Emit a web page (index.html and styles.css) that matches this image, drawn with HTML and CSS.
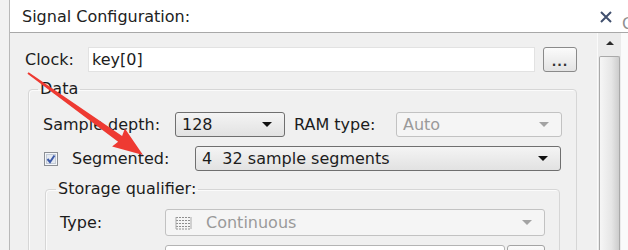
FILE: index.html
```html
<!DOCTYPE html>
<html lang="en">
<head>
    <meta charset="UTF-8">
    <title>Signal Configuration</title>
    <link rel="stylesheet" href="styles.css">
</head>
<body>
    <div class="app">
        <div class="gutter"></div>
        <div class="window">
            <div class="titlebar">
                <span class="title">Signal Configuration:</span>
                <svg class="close" width="14" height="12" viewBox="0 0 14 12">
                    <path d="M2 1 L12 11 M12 1 L2 11" stroke="#41506e" stroke-width="2" fill="none"/>
                </svg>
                <span class="peek">C</span>
            </div>
            <div class="body">
                <div class="main">
                    <div class="row clock-row">
                        <span class="lbl lbl-clock">Clock:</span>
                        <div class="textbox clock-box">key[0]</div>
                        <button class="btn btn-dots">...</button>
                    </div>

                    <fieldset class="group data">
                        <legend>Data</legend>
                        <div class="row">
                            <span class="lbl lbl-depth">Sample depth:</span>
                            <div class="combo w-depth"><span>128</span><i class="caret"></i></div>
                            <span class="lbl lbl-ram">RAM type:</span>
                            <div class="combo disabled w-ram"><span>Auto</span><i class="caret"></i></div>
                        </div>
                        <div class="row seg-row">
                            <span class="check">
                                <svg width="14" height="14" viewBox="0 0 14 14">
                                    <rect x="0.5" y="0.5" width="13" height="13" fill="#f4f6f9" stroke="#8c8f94"/>
                                    <rect x="2.5" y="2.5" width="9" height="9" fill="#e4e9f1" stroke="#c3cbd6"/>
                                    <path d="M3.5 7 L6 10 L10.5 3.5" stroke="#3d5aa8" stroke-width="2" fill="none"/>
                                </svg>
                            </span>
                            <span class="lbl lbl-seg">Segmented:</span>
                            <div class="combo w-seg"><span>4&nbsp; 32 sample segments</span><i class="caret"></i></div>
                        </div>

                        <fieldset class="group storage">
                            <legend>Storage qualifier:</legend>
                            <div class="row">
                                <span class="lbl lbl-type">Type:</span>
                                <div class="combo disabled w-type">
                                    <svg class="type-icon" width="17" height="14" viewBox="0 0 17 14">
                                        <path d="M1 1.5 H16 M1 4.5 H16 M1 7.5 H16 M1 10.5 H16 M1 13 H16" stroke="#8f8f8f" stroke-width="1" stroke-dasharray="2 1"/>
                                        <path d="M1 1 V13 M16 1 V13" stroke="#ababab" stroke-width="1"/>
                                    </svg>
                                    <span>Continuous</span><i class="caret"></i>
                                </div>
                            </div>
                            <div class="row last-row">
                                <div class="textbox w-last"></div>
                                <button class="btn btn-last"></button>
                            </div>
                        </fieldset>
                    </fieldset>
                </div>
                <div class="scrollbar">
                    <div class="sb-up"><i></i></div>
                    <div class="sb-thumb"></div>
                </div>
                <div class="edge"></div>
            </div>
        </div>

        <!-- red annotation arrow -->
        <svg class="arrow" width="628" height="250" viewBox="0 0 628 250">
            <polygon points="28.6,72.2 122.1,135.9 124.9,128.6 143,155 112.1,146.6 118.1,141.7 27.4,73.8" fill="#ee3a32"/>
        </svg>
    </div>
</body>
</html>
```

FILE: styles.css
```css
html, body {
    margin: 0;
    padding: 0;
}
body {
    width: 628px;
    height: 250px;
    overflow: hidden;
    font-family: "DejaVu Sans", Verdana, sans-serif;
    font-size: 16px;
    color: #1c1c1c;
    background: #f0f0f0;
}
.app {
    position: relative;
    display: flex;
    height: 250px;
}
.gutter {
    flex-shrink: 0;
    width: 9px;
    background: #f2f2f2;
    border-right: 1px solid #b9b9b9;
}
.window {
    flex: 1;
    min-width: 0;
    display: flex;
    flex-direction: column;
}
.titlebar {
    flex-shrink: 0;
    height: 32px;
    display: flex;
    align-items: center;
    background: #ffffff;
    border-bottom: 1px solid #a8a8a8;
}
.title {
    padding-left: 12px;
    color: #222;
}
.close {
    margin-left: auto;
    margin-right: 9px;
    margin-top: 1px;
}
.peek {
    width: 6px;
    overflow: hidden;
    color: #8f8f8f;
    font-size: 16px;
    margin-top: 14px;
}
.body {
    flex: 1;
    min-height: 0;
    overflow: hidden;
    display: flex;
    background: #f0f0f0;
}
.main {
    flex-shrink: 0;
    width: 552px;
    padding: 14px 20px 0 15px;
}
.row {
    display: flex;
    align-items: center;
}
.lbl {
    flex-shrink: 0;
    white-space: nowrap;
}
.lbl-clock { width: 63px; }
.textbox {
    flex-shrink: 0;
    box-sizing: border-box;
    height: 25px;
    background: #ffffff;
    border: 1px solid #e2e2e2;
    padding-left: 3px;
    line-height: 23px;
}
.clock-box { width: 447px; }
.btn {
    flex-shrink: 0;
    box-sizing: border-box;
    height: 25px;
    border: 1px solid #8a8a8a;
    border-radius: 3px;
    background: linear-gradient(#fbfbfb, #e3e3e3);
    padding: 0;
}
.btn-dots {
    width: 34px;
    margin-left: 8px;
    font-family: "DejaVu Sans", sans-serif;
    font-size: 12px;
    font-weight: bold;
    letter-spacing: 1px;
    color: #333;
    line-height: 28px;
}
.group {
    border: 1px solid #d6d6d6;
    border-radius: 4px;
    box-shadow: inset 1px 1px 0 #fbfbfb;
    margin: 0;
}
.group legend {
    padding: 0 2px;
    line-height: 18px;
}
.data {
    margin: 8px 0 0 3px;
    padding: 14px 14px 40px 14px;
}
.data legend {
    margin-left: -5px;
}
.lbl-depth { width: 132px; }
.combo {
    flex-shrink: 0;
    box-sizing: border-box;
    height: 25px;
    display: flex;
    align-items: center;
    border: 1px solid #6f6f6f;
    border-radius: 3px;
    background: linear-gradient(#f4f4f4, #e2e2e2);
    padding-left: 6px;
}
.caret {
    margin-left: auto;
    margin-right: 12px;
    width: 0;
    height: 0;
    border-left: 5px solid transparent;
    border-right: 5px solid transparent;
    border-top: 5px solid #111;
}
.combo.disabled {
    border-color: #c2c2c2;
    background: #f5f5f5;
    color: #9a9a9a;
}
.combo.disabled .caret {
    border-top-color: #a3a3a3;
}
.w-depth { width: 110px; }
.lbl-ram {
    width: 102px;
    margin-left: 9px;
}
.w-ram { width: 166px; }
.seg-row {
    margin-top: 9px;
}
.check {
    flex-shrink: 0;
    width: 14px;
    height: 14px;
    margin-left: 1px;
}
.check svg {
    display: block;
}
.lbl-seg {
    width: 123px;
    margin-left: 14px;
}
.w-seg { width: 366px; }
.storage {
    margin: 9px 2px 0 2px;
    padding: 11px 14px 20px 14px;
}
.storage legend {
    margin-left: -4px;
}
.lbl-type { width: 105px; }
.w-type {
    width: 380px;
    height: 27px;
    padding-left: 9px;
}
.type-icon {
    margin-right: 14px;
}
.last-row {
    margin-top: 9px;
    padding-left: 105px;
}
.w-last {
    width: 340px;
    border-color: #b4b4b4;
    border-radius: 3px;
}
.btn-last {
    width: 38px;
    margin-left: 2px;
    border-color: #a4a4a4;
}
.scrollbar {
    flex-shrink: 0;
    box-sizing: border-box;
    width: 24px;
    display: flex;
    flex-direction: column;
    background: #ebebeb;
    border-left: 1px solid #fafafa;
}
.sb-up {
    flex-shrink: 0;
    height: 23px;
    display: flex;
    justify-content: center;
    align-items: center;
}
.sb-up i {
    width: 0;
    height: 0;
    border-left: 4px solid transparent;
    border-right: 4px solid transparent;
    border-bottom: 4px solid #2b2b2b;
    margin-top: -4px;
}
.sb-thumb {
    flex: 1;
    margin: 0 1px 0 1px;
    border: 1px solid #a9a9a9;
    border-bottom: none;
    border-radius: 2px 2px 0 0;
    background: linear-gradient(to right, #f6f6f6, #e6e6e6 60%, #cdcdcd);
}
.edge {
    flex-shrink: 0;
    width: 7px;
    background: #fafafa;
}
.arrow {
    position: absolute;
    left: 0;
    top: 0;
    pointer-events: none;
}
```
